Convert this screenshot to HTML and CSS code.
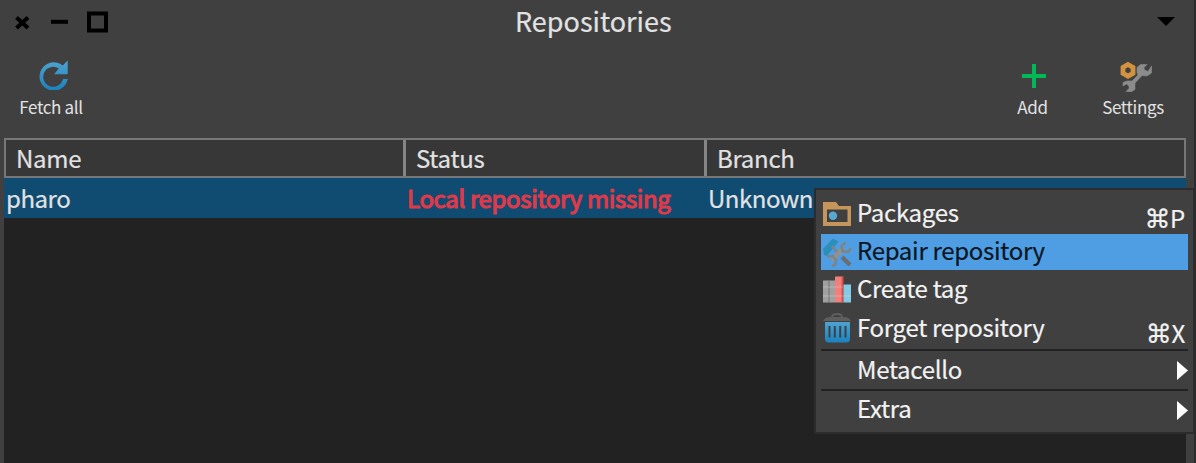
FILE: index.html
```html
<!DOCTYPE html>
<html lang="en">
<head>
<meta charset="utf-8">
<title>Repositories</title>
<link rel="stylesheet" href="styles.css">
</head>
<body>
<div class="window">
  <header class="titlebar">
    <svg class="controls" width="120" height="44" viewBox="0 0 120 44">
      <path d="M16.500 17.500l11.500 10.500M28 17.500L16.500 28" stroke="#000" stroke-width="4"/>
      <path d="M51 21.800h17" stroke="#000" stroke-width="4"/>
      <rect x="89" y="13.500" width="17" height="17" fill="none" stroke="#000" stroke-width="4"/>
    </svg>
    <h1 class="title">Repositories</h1>
    <svg class="collapse" width="18" height="10" viewBox="0 0 18 10"><path d="M0 0h18L9 9z" fill="#000"/></svg>
  </header>
  <div class="toolbar">
    <div class="tool fetch">
      <svg width="32" height="32" viewBox="0 0 32 32">
        <defs><linearGradient id="blue" x1="0" y1="0" x2="0" y2="1"><stop offset="0" stop-color="#4ea3d0"/><stop offset="1" stop-color="#1c82bd"/></linearGradient></defs>
        <path d="M24.700 7.500A14.200 14.200 0 1 0 29.700 21L25 21A10 10 0 1 1 20.800 10.500L16 16.200H29.700V2.500z" fill="url(#blue)"/>
      </svg>
      <span class="label">Fetch all</span>
    </div>
    <div class="tool add">
      <svg width="32" height="32" viewBox="0 0 32 32"><path d="M4 18h24M16 6v24" stroke="#00b956" stroke-width="4"/></svg>
      <span class="label">Add</span>
    </div>
    <div class="tool settings">
      <svg width="36" height="34" viewBox="0 0 36 34">
        <path d="M10 6.500l5 2.800v6L10 18.200l-5-2.900v-6z" fill="none" stroke="#d3923f" stroke-width="4.800"/>
        <path d="M29 6.500h-6.500l-3.500 3v5l1 2.500-6 6H9l-4 1.500v3.500l3.500-2 2.500 2v2.500l-3 3 5 .500 4-2.500V25l7-7.500 5 .500 4.500-3V8l-3.500 5.500-3.500-1.500-.500-2.500z" fill="#8c8c8c" stroke="#8c8c8c" stroke-width=".6"/>
      </svg>
      <span class="label">Settings</span>
    </div>
  </div>
  <main class="table">
    <div class="head"><div class="cell">Name</div><div class="cell">Status</div><div class="cell">Branch</div></div>
    <div class="row"><span class="cell">pharo</span><span class="cell missing">Local repository missing</span><span class="cell">Unknown</span></div>
  </main>
</div>
<nav class="menu">
  <div class="item">
    <svg class="icon" width="30" height="30" viewBox="0 0 30 30"><path d="M1 4h13l3 4h12v20H1zM5 11.500v12.500h20.500V11.500z" fill="#c4965c" fill-rule="evenodd"/><circle cx="11" cy="17.700" r="4.200" fill="#58a9d2"/></svg>
    <span class="name">Packages</span><span class="key"><span class="cmd">⌘</span>P</span>
  </div>
  <div class="item selected">
    <svg class="icon" width="30" height="30" viewBox="0 0 30 30"><path d="M1 12L11 1.500l5.500 3L5 19l-3-1z" fill="#2c8fba"/><path d="M20 20l8 8" stroke="#6b6e70" stroke-width="4.500"/><path d="M9.500 23L22 11" stroke="#929292" stroke-width="5"/><path d="M23.500 5.500l-4 3.500 1 5 5.500 1 3-4M5 19.500l6-.500 3 4-1 5-3 1M10 9l5 6" fill="none" stroke="#7d8488" stroke-width="2.600"/></svg>
    <span class="name">Repair repository</span>
  </div>
  <div class="item">
    <svg class="icon" width="30" height="30" viewBox="0 0 30 30"><path d="M1 6.500h12v22H1z" fill="#a0a0a0"/><path d="M7 6.500v22" stroke="#707070"/><path d="M13 2.500h8v26h-8z" fill="#f17f7c"/><path d="M20.500 2.500v26" stroke="#df4c49" stroke-width="2"/><path d="M21.500 10.500h7.500v18h-7.500z" fill="#83cae5"/><path d="M1 13h20M1 22h28" stroke="#fff" stroke-opacity=".25"/></svg>
    <span class="name">Create tag</span>
  </div>
  <div class="item forget">
    <svg class="icon" width="30" height="30" viewBox="0 0 30 30"><path d="M10 4q0-3 5-3t5 3" fill="none" stroke="#5e5e5e" stroke-width="2"/><path d="M1 8q2-4 7-4h14q5 0 7 4z" fill="#5e5e5e"/><path d="M3 9h25v17q0 3.500-4 3.500H7Q3 29.500 3 26z" fill="url(#blue)"/><path d="M7.500 13v11.500M12.800 13v11.500M18.200 13v11.500M23.500 13v11.500" stroke="#36434b" stroke-width="2"/></svg>
    <span class="name">Forget repository</span><span class="key"><span class="cmd">⌘</span>X</span>
  </div>
  <div class="item sub"><span class="name">Metacello</span><svg class="arrow" width="11" height="19" viewBox="0 0 11 19"><path d="M0 0l11 9.500L0 19z" fill="#fff"/></svg></div>
  <div class="item sub"><span class="name">Extra</span><svg class="arrow" width="11" height="19" viewBox="0 0 11 19"><path d="M0 0l11 9.500L0 19z" fill="#fff"/></svg></div>
</nav>
</body>
</html>
```
FILE: styles.css
```css
* { box-sizing: border-box; }
body {
  margin: 0;
  width: 1196px;
  height: 463px;
  overflow: hidden;
  background: #404040;
  color: #e2e2e2;
  font: 24px/40px "Noto Sans CJK SC", sans-serif;
  letter-spacing: -0.3px;
  -webkit-text-stroke: 0.2px;
  white-space: nowrap;
}
svg { display: block; flex: none; }
.window {
  height: 463px;
  display: flex;
  flex-direction: column;
  border-right: 2px solid #2b2b2b;
}
.titlebar {
  height: 44px;
  display: flex;
}
.title {
  margin: 0 0 0 395px;
  font-size: 27px;
  font-weight: 400;
  line-height: 41px;
  letter-spacing: 0;
}
.collapse { margin: 17px 19px 0 auto; }
.toolbar {
  height: 94px;
  display: flex;
  padding: 13px 21px 0 11px;
}
.tool {
  display: flex;
  flex-direction: column;
  align-items: center;
  width: 80px;
}
.tool .label { font-size: 17px; line-height: 24px; margin-top: 6px; letter-spacing: -0.35px; -webkit-text-stroke-width: 0; }
.fetch svg { margin-left: 6px; margin-top: 1px; margin-bottom: -1px; }
.add { margin-left: auto; }
.add svg { margin: 1px 0 -1px 4px; }
.add .label { padding-left: 1px; }
.settings { margin-left: 21px; }
.settings svg { margin: 1px 0 -3px 6px; }
.table {
  flex: 1;
  margin: 0 8px 0 4px;
  background: #222;
}
.head, .row { display: grid; grid-template-columns: 401px 301px 1fr; height: 40px; }
.head {
  border: 2px solid #777;
  background: #373737;
  line-height: 35px;
  grid-template-columns: 400px 301px 1fr;
}
.head .cell { padding-left: 10px; }
.head .cell:not(:last-child) { border-right: 3px solid #858585; }
.row { background: #104b72; line-height: 39px; padding-left: 2px; letter-spacing: -0.45px; }
.missing { color: #df3a4a; -webkit-text-stroke-width: 1.2px; letter-spacing: -0.34px; }
.menu {
  position: absolute;
  left: 814px;
  top: 188px;
  width: 381px;
  height: 246px;
  padding: 4px 5px 0 5px;
  border: 2px solid #2c2c2c;
  background: #404040;
  color: #f2f2f2;
}
.item { display: flex; align-items: center; height: 38px; line-height: 36px; padding-right: 3px; }
.icon { margin: 0 5px 0 1px; }
.name { padding-bottom: 2px; }
.selected { background: #4f9ee3; color: #0c1522; height: 36px; margin-top: 2px; }
.selected .name { padding-bottom: 4px; }
.forget { margin: 1px 0 2px; }
.key { margin-left: auto; padding-top: 10px; }
.cmd { font-family: "DejaVu Sans", sans-serif; font-size: 26px; line-height: 1; }
.sub { height: 40px; padding: 0 0 0 36px; border-top: 2px solid #222; }
.sub + .sub .name { padding-bottom: 4px; }
.arrow { margin-left: auto; }
```
